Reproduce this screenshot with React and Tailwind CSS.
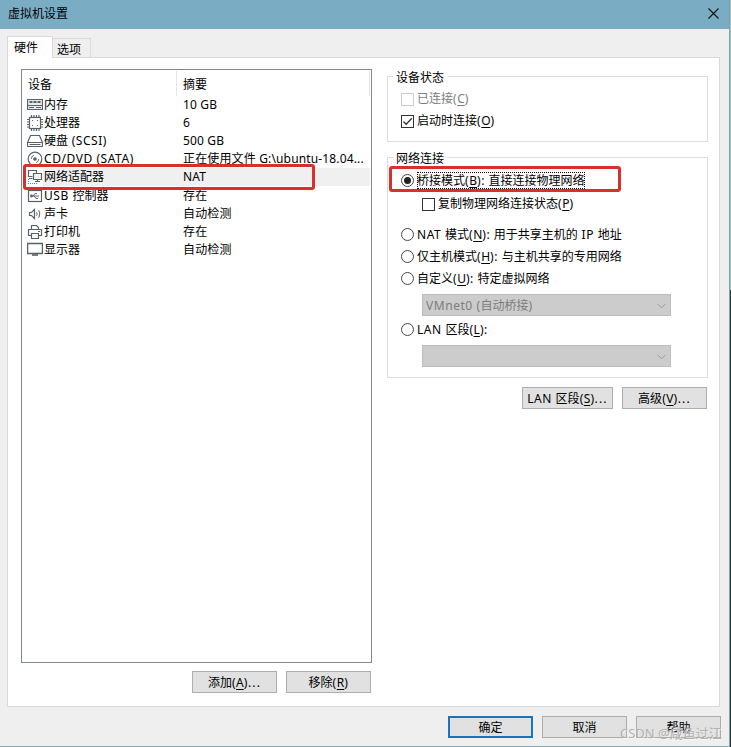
import clsx from "clsx"

const devices = [
  { icon: "memory", name: "内存", summary: "10 GB" },
  { icon: "cpu", name: "处理器", summary: "6" },
  { icon: "disk", name: "硬盘 (SCSI)", summary: "500 GB" },
  { icon: "cd", name: "CD/DVD (SATA)", summary: "正在使用文件 G:\\ubuntu-18.04..." },
  { icon: "network", name: "网络适配器", summary: "NAT", selected: true },
  { icon: "usb", name: "USB 控制器", summary: "存在" },
  { icon: "sound", name: "声卡", summary: "自动检测" },
  { icon: "printer", name: "打印机", summary: "存在" },
  { icon: "display", name: "显示器", summary: "自动检测" },
];

// 16x16 device icons
const icons = {
  memory: (
    <>
      <path d="M.5 2.5h15v10H.5z" fill="#e8ebec" />
      <path d="M2.5 5h3M6.5 5h3M10.5 5h3" strokeWidth="2" />
      <path d="M1 8.5h14M2 10.5h5M9 10.5h5" />
    </>
  ),
  cpu: (
    <>
      <rect x="2.5" y="2.5" width="11" height="11" />
      <path d="M4.5 0v2M7 0v2M9.5 0v2M12 0v2M4.5 14v2M7 14v2M9.5 14v2M12 14v2M0 4.5h2M0 7h2M0 9.5h2M0 12h2M14 4.5h2M14 7h2M14 9.5h2M14 12h2" />
      <path d="M5 5.5h1M10 5.5h1M5 10.5h1M10 10.5h1" />
    </>
  ),
  disk: <path d="M3.5 2.5h9l3 7v4H.5v-4zM.5 9.5h15M2.5 11.5h11" />,
  cd: (
    <>
      <circle cx="8" cy="8" r="6.8" />
      <circle cx="8" cy="8" r="1.2" fill="#56616a" />
      <path d="M4.2 8A4 4 0 0 1 7 4.3M11.8 8A4 4 0 0 1 9 11.7" strokeWidth=".9" />
    </>
  ),
  network: (
    <>
      <path d="M5.5 7.5h-4v-6h8v3M2 9.5h3.5" />
      <path d="M6.5 4.5h8v6h-8z" fill="#f4f4f4" />
      <path d="M10.5 10.5v2M8 12.5h5" />
      <path d="M1.5 10v4.5H10" stroke="#3f8ccc" strokeDasharray="1 1" />
    </>
  ),
  usb: (
    <>
      <rect x="1.5" y="2.5" width="13" height="11" />
      <path d="M4 8h8M6 8l2-2.5h2M7 8l2 2.5h2" strokeWidth="1" />
      <circle cx="4.5" cy="8" r=".8" fill="#56616a" />
    </>
  ),
  sound: (
    <>
      <path d="M2.5 6.5h2l3-3v9l-3-3h-2z" />
      <path d="M9.6 6.3q1.2 1.7 0 3.4M11.8 4.3q2 3.7 0 7.4" strokeWidth="1" />
    </>
  ),
  printer: (
    <path d="M4.5 5.5v-4h5l2 2v2M4.5 11.5h-3v-6h13v6h-3M4.5 9.5h7v5h-7zM11 7.5h2" />
  ),
  display: (
    <>
      <path d="M.6 1.5h14.8v10H.6z" strokeWidth="1.3" />
      <path d="M5 13h6" strokeWidth="1.6" />
    </>
  ),
};

function DeviceIcon({ name }) {
  return (
    <svg viewBox="0 0 16 16" className="w-4 h-4 shrink-0" fill="none" stroke="#56616a" strokeWidth="1.2">
      {icons[name]}
    </svg>
  )
}

// latin runs are set a bit wider than the chinese ones
function Text({ children }) {
  const runs = (children || "").match(/[\x20-\x7e]+|[^\x20-\x7e]+/g) || [];
  return runs.map((run, i) => (
    <span key={i} className={clsx(/^[\x20-\x7e]/.test(run) && "tracking-[0.55px]")}>
      {run}
    </span>
  ))
}

// "_X" marks the accelerator key of a label
function Label({ text }) {
  const [before, rest] = text.split("_");
  if (!rest) return <span><Text>{text}</Text></span>
  const dots = rest.endsWith("...");
  return (
    <span>
      <Text>{before}</Text>
      <span className="underline underline-offset-2 decoration-1">{rest[0]}</span>
      <Text>{dots ? rest.slice(1, -3) : rest.slice(1)}</Text>
      {dots && <span className="tracking-[1.2px]">...</span>}
    </span>
  )
}

function Button({ text, primary, className }) {
  return (
    <button
      className={clsx(
        "h-[22px] flex items-center justify-center bg-[#e1e1e1] pt-[2px]",
        primary ? "border-2 border-[#1a74bb]" : "border border-[#adadad]",
        className || "w-[85px]"
      )}
    >
      <Label text={text} />
    </button>
  )
}

function Checkbox({ text, checked, disabled }) {
  return (
    <label className={clsx("h-[22px] flex items-center gap-[3px]", disabled && "text-[#7c7c7c]")}>
      <span className={clsx("w-[13px] h-[13px] border", disabled ? "border-[#cccccc]" : "border-[#333333]")}>
        {checked && (
          <svg viewBox="0 0 11 11" className="w-[11px] h-[11px]" fill="none" stroke="#333" strokeWidth="1.3">
            <path d="M1.5 5.5l2.7 2.7L9.8 2.3" />
          </svg>
        )}
      </span>
      <Label text={text} />
    </label>
  )
}

function Radio({ text, checked }) {
  return (
    <label className="h-[22px] flex items-center gap-[3px]">
      <span className="w-[13px] h-[13px] rounded-full border border-[#444444] flex items-center justify-center">
        {checked && <span className="w-[7px] h-[7px] rounded-full bg-[#222222]" />}
      </span>
      <span className={clsx("h-[17px] leading-[18px]", checked && "outline-1 outline-dotted outline-black -outline-offset-1")}>
        <Label text={text} />
      </span>
    </label>
  )
}

function Select({ text }) {
  return (
    <div className="ml-[21px] w-[249px] h-[22px] shrink-0 flex items-center justify-between border border-[#bcbcbc] bg-[#cccccc] pl-[3px] pr-1 pt-px text-[#7c7c7c]">
      <span><Text>{text}</Text></span>
      <svg viewBox="0 0 9 6" className="w-[9px] h-[6px]" fill="none" stroke="#999">
        <path d="M.5 .8l4 4 4-4" />
      </svg>
    </div>
  )
}

function Group({ title, className, children }) {
  return (
    <section className={clsx("w-[321px] border border-[#dcdcdc] pl-[13px]", className)}>
      <h2 className="w-fit h-4 -mt-2 -ml-[8px] px-[3px] bg-white leading-[18px]">{title}</h2>
      {children}
    </section>
  )
}

export default function App() {
  return (
    <div className="relative w-[731px] h-[747px] overflow-hidden flex bg-[#efefef] text-black text-[12px] leading-[18px] whitespace-nowrap font-['Noto_Sans','Noto_Sans_CJK_SC',sans-serif]">
      <div className="w-[729px] flex flex-col border-b border-[#7fb0b8]">
        <header className="h-[29px] shrink-0 flex items-center justify-between bg-[#7aadc4] pl-2 pr-[10px] pb-[2px]">
          <h1>虚拟机设置</h1>
          <svg viewBox="0 0 11 11" className="w-[11px] h-[11px]" fill="none" stroke="#111" strokeWidth="1.1">
            <path d="M.5 .5l10 10M10.5 .5l-10 10" />
          </svg>
        </header>

        <nav className="h-[28px] shrink-0 flex items-end pl-[7px] pt-[7px]">
          <div className="relative z-10 w-[46px] h-[22px] -mb-px border border-b-0 border-[#d9d9d9] bg-white pl-[6px] pt-[2px]">硬件</div>
          <div className="w-[38px] h-[19px] border border-l-0 border-b-0 border-[#d9d9d9] pl-1 pt-[2px]">选项</div>
        </nav>

        <main className="ml-[7px] w-[713px] h-[650px] shrink-0 flex border border-[#d9d9d9] bg-white pl-[13px] pt-[11px]">
          <div className="w-[351px]">
            <div className="h-[594px] border border-[#828790]">
              <div className="h-[26px] flex pt-px leading-[28px]">
                <div className="w-[155px] h-[25px] pl-[6px] border-r border-[#e5e5e5]">设备</div>
                <div className="w-[193px] h-[25px] pl-[6px] border-r border-[#e5e5e5]">摘要</div>
              </div>
              {devices.map((d) => (
                <div key={d.icon} className="h-[18.1px] flex items-center pl-[5px]">
                  <DeviceIcon name={d.icon} />
                  <div className={clsx("w-[327px] h-[18px] flex", d.selected && "bg-[#f0f0f0]")}>
                    <span className="w-[140px] pl-px"><Text>{d.name}</Text></span>
                    <span className="tracking-[0.15px]">{d.summary}</span>
                  </div>
                </div>
              ))}
            </div>
            <div className="flex justify-end gap-[9px] pt-2 pr-px">
              <Button text="添加(_A)..." />
              <Button text="移除(_R)" />
            </div>
          </div>

          <div className="ml-[15px] pt-[7px]">
            <Group title="设备状态" className="h-[66px]">
              <div className="pt-[3px]">
                <Checkbox text="已连接(_C)" disabled />
                <Checkbox text="启动时连接(_O)" checked />
              </div>
            </Group>
            <Group title="网络连接" className="mt-[15px] h-[221px]">
              <div className="pt-[3px]">
                <Radio text="桥接模式(_B): 直接连接物理网络" checked />
                <div className="pl-[21px] pt-[2px]">
                  <Checkbox text="复制物理网络连接状态(_P)" />
                </div>
                <div className="pt-[8px]">
                  <Radio text="NAT 模式(_N): 用于共享主机的 IP 地址" />
                  <Radio text="仅主机模式(_H): 与主机共享的专用网络" />
                  <Radio text="自定义(_U): 特定虚拟网络" />
                </div>
                <div className="pt-[5px]">
                  <Select text="VMnet0 (自动桥接)" />
                </div>
                <div className="pt-[2px]">
                  <Radio text="LAN 区段(_L):" />
                </div>
                <div className="pt-[5px]">
                  <Select />
                </div>
              </div>
            </Group>
            <div className="flex justify-end gap-[9px] pt-[9px] pr-px">
              <Button text="LAN 区段(_S)..." className="w-[91px]" />
              <Button text="高级(_V)..." />
            </div>
          </div>
        </main>

        <footer className="flex justify-end gap-[9px] pt-[9px] pr-2">
          <Button text="确定" primary />
          <Button text="取消" />
          <Button text="帮助" />
        </footer>
      </div>

      {/* desktop behind the window */}
      <div className="w-px bg-[#7aa3b0]" />
      <div className="w-px flex flex-col">
        <div className="h-[290px] bg-[#a9bfc3]" />
        <div className="grow bg-[#26343c]" />
      </div>

      {/* red highlights */}
      <div className="absolute z-20 left-[23px] top-[164px] w-[292px] h-[26px] border-3 border-[#d9302a] rounded-[3px]" />
      <div className="absolute z-20 left-[389px] top-[166px] w-[232px] h-[26px] border-3 border-[#d9302a] rounded-[3px]" />

      <div className="absolute z-20 left-[620px] top-[723px] text-[13px] leading-[20px] text-[#b0b0b0] [text-shadow:1px_1px_0_#ffffff90]">CSDN @咸鱼过江</div>
    </div>
  )
}
